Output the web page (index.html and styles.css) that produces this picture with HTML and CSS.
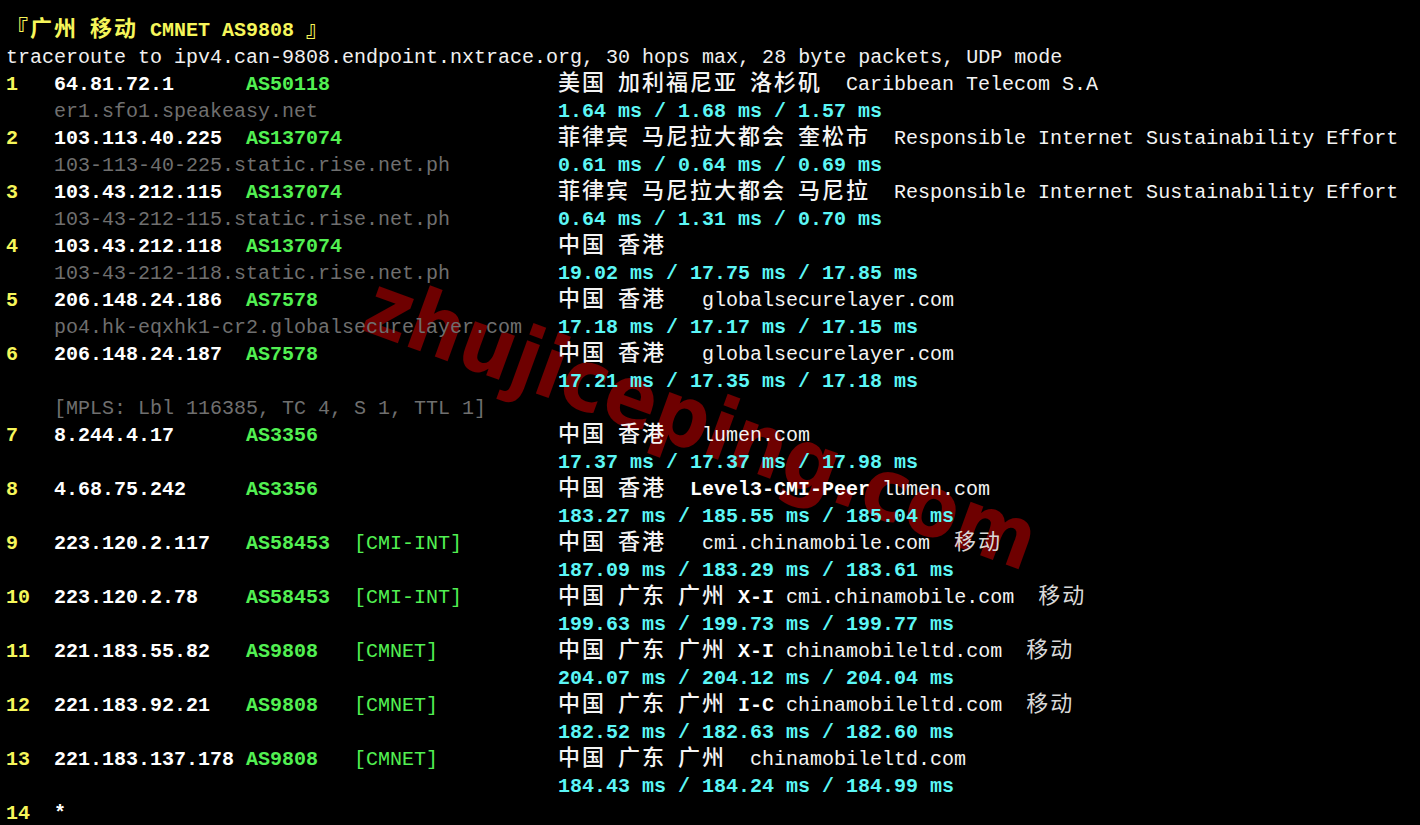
FILE: index.html
```html
<!DOCTYPE html>
<html lang="zh-CN">
<head>
<meta charset="utf-8">
<title>nexttrace</title>
<link rel="stylesheet" href="styles.css">
</head>
<body>
<div class="term">
  <div class="watermark">zhujiceping.com</div>

  <div class="line title"><span class="cj">『广州</span> <span class="cj">移动</span> CMNET AS9808 <span class="cj">』</span></div>
  <div class="line plain">traceroute to ipv4.can-9808.endpoint.nxtrace.org, 30 hops max, 28 byte packets, UDP mode</div>

  <div class="hop"><span class="n">1</span><span class="ip">64.81.72.1</span><span class="as">AS50118</span><span class="tag"></span><span class="loc"><span class="cj">美国</span> <span class="cj">加利福尼亚</span> <span class="cj">洛杉矶</span>  Caribbean Telecom S.A</span></div>
  <div class="hop"><span class="host">er1.sfo1.speakeasy.net</span><span class="ms">1.64 ms / 1.68 ms / 1.57 ms</span></div>

  <div class="hop"><span class="n">2</span><span class="ip">103.113.40.225</span><span class="as">AS137074</span><span class="tag"></span><span class="loc"><span class="cj">菲律宾</span> <span class="cj">马尼拉大都会</span> <span class="cj">奎松市</span>  Responsible Internet Sustainability Effort</span></div>
  <div class="hop"><span class="host">103-113-40-225.static.rise.net.ph</span><span class="ms">0.61 ms / 0.64 ms / 0.69 ms</span></div>

  <div class="hop"><span class="n">3</span><span class="ip">103.43.212.115</span><span class="as">AS137074</span><span class="tag"></span><span class="loc"><span class="cj">菲律宾</span> <span class="cj">马尼拉大都会</span> <span class="cj">马尼拉</span>  Responsible Internet Sustainability Effort</span></div>
  <div class="hop"><span class="host">103-43-212-115.static.rise.net.ph</span><span class="ms">0.64 ms / 1.31 ms / 0.70 ms</span></div>

  <div class="hop"><span class="n">4</span><span class="ip">103.43.212.118</span><span class="as">AS137074</span><span class="tag"></span><span class="loc"><span class="cj">中国</span> <span class="cj">香港</span></span></div>
  <div class="hop"><span class="host">103-43-212-118.static.rise.net.ph</span><span class="ms">19.02 ms / 17.75 ms / 17.85 ms</span></div>

  <div class="hop"><span class="n">5</span><span class="ip">206.148.24.186</span><span class="as">AS7578</span><span class="tag"></span><span class="loc"><span class="cj">中国</span> <span class="cj">香港</span>   globalsecurelayer.com</span></div>
  <div class="hop"><span class="host">po4.hk-eqxhk1-cr2.globalsecurelayer.com</span><span class="ms">17.18 ms / 17.17 ms / 17.15 ms</span></div>

  <div class="hop"><span class="n">6</span><span class="ip">206.148.24.187</span><span class="as">AS7578</span><span class="tag"></span><span class="loc"><span class="cj">中国</span> <span class="cj">香港</span>   globalsecurelayer.com</span></div>
  <div class="hop"><span class="host"></span><span class="ms">17.21 ms / 17.35 ms / 17.18 ms</span></div>
  <div class="hop"><span class="host">[MPLS: Lbl 116385, TC 4, S 1, TTL 1]</span></div>

  <div class="hop"><span class="n">7</span><span class="ip">8.244.4.17</span><span class="as">AS3356</span><span class="tag"></span><span class="loc"><span class="cj">中国</span> <span class="cj">香港</span>   lumen.com</span></div>
  <div class="hop"><span class="host"></span><span class="ms">17.37 ms / 17.37 ms / 17.98 ms</span></div>

  <div class="hop"><span class="n">8</span><span class="ip">4.68.75.242</span><span class="as">AS3356</span><span class="tag"></span><span class="loc"><span class="cj">中国</span> <span class="cj">香港</span>  <b>Level3-CMI-Peer</b> lumen.com</span></div>
  <div class="hop"><span class="host"></span><span class="ms">183.27 ms / 185.55 ms / 185.04 ms</span></div>

  <div class="hop"><span class="n">9</span><span class="ip">223.120.2.117</span><span class="as">AS58453</span><span class="tag">[CMI-INT]</span><span class="loc"><span class="cj">中国</span> <span class="cj">香港</span>   cmi.chinamobile.com  <span class="cj isp">移动</span></span></div>
  <div class="hop"><span class="host"></span><span class="ms">187.09 ms / 183.29 ms / 183.61 ms</span></div>

  <div class="hop"><span class="n">10</span><span class="ip">223.120.2.78</span><span class="as">AS58453</span><span class="tag">[CMI-INT]</span><span class="loc"><span class="cj">中国</span> <span class="cj">广东</span> <span class="cj">广州</span> <b>X-I</b> cmi.chinamobile.com  <span class="cj isp">移动</span></span></div>
  <div class="hop"><span class="host"></span><span class="ms">199.63 ms / 199.73 ms / 199.77 ms</span></div>

  <div class="hop"><span class="n">11</span><span class="ip">221.183.55.82</span><span class="as">AS9808</span><span class="tag">[CMNET]</span><span class="loc"><span class="cj">中国</span> <span class="cj">广东</span> <span class="cj">广州</span> <b>X-I</b> chinamobileltd.com  <span class="cj isp">移动</span></span></div>
  <div class="hop"><span class="host"></span><span class="ms">204.07 ms / 204.12 ms / 204.04 ms</span></div>

  <div class="hop"><span class="n">12</span><span class="ip">221.183.92.21</span><span class="as">AS9808</span><span class="tag">[CMNET]</span><span class="loc"><span class="cj">中国</span> <span class="cj">广东</span> <span class="cj">广州</span> <b>I-C</b> chinamobileltd.com  <span class="cj isp">移动</span></span></div>
  <div class="hop"><span class="host"></span><span class="ms">182.52 ms / 182.63 ms / 182.60 ms</span></div>

  <div class="hop"><span class="n">13</span><span class="ip">221.183.137.178</span><span class="as">AS9808</span><span class="tag">[CMNET]</span><span class="loc"><span class="cj">中国</span> <span class="cj">广东</span> <span class="cj">广州</span>  chinamobileltd.com</span></div>
  <div class="hop"><span class="host"></span><span class="ms">184.43 ms / 184.24 ms / 184.99 ms</span></div>

  <div class="hop"><span class="n">14</span><span class="ip">*</span></div>
</div>
</body>
</html>
```

FILE: styles.css
```css
html, body {
  margin: 0;
  padding: 0;
  background: #000;
}

.term {
  position: relative;
  width: 1420px;
  height: 825px;
  overflow: hidden;
  box-sizing: border-box;
  padding: 17px 0 0 6px;
  font-family: "Liberation Mono", "Noto Sans CJK SC", monospace;
  font-size: 20px;
  line-height: 27px;
  color: #f2f2f2;
}

.line,
.hop {
  position: relative;
  z-index: 1;
  height: 27px;
  white-space: pre;
}

.hop > span {
  white-space: pre;
}

.title {
  color: #f6f65a;
  font-weight: bold;
}

.plain {
  color: #f0f0f0;
}

.hop {
  display: grid;
  grid-template-columns: 48px 192px 108px 204px 1fr;
}

.n {
  color: #f6f65a;
  font-weight: bold;
}

.ip {
  grid-column: 2;
  color: #ffffff;
  font-weight: bold;
}

.as {
  color: #52f052;
  font-weight: bold;
}

.tag {
  color: #52f052;
}

.loc {
  color: #f4f4f4;
}

.loc b {
  color: #ffffff;
  font-weight: bold;
}

.host {
  grid-column: 2 / 5;
  color: #6f6f6f;
}

.ms {
  grid-column: 5;
  color: #5cf6f6;
  font-weight: bold;
}

.cj {
  font-family: "Noto Sans CJK SC", sans-serif;
  font-size: 22px;
  line-height: 0;
  letter-spacing: 2px;
  font-weight: 500;
}

.title .cj {
  font-weight: bold;
}

.isp {
  color: #d8d8d8;
  font-weight: normal;
}

.watermark {
  position: absolute;
  z-index: 0;
  left: 702px;
  top: 422px;
  transform: translate(-50%, -50%) rotate(20deg);
  font-family: "DejaVu Sans Condensed", "DejaVu Sans", sans-serif;
  font-weight: bold;
  font-size: 86px;
  line-height: 1;
  color: #6e0000;
}
```
